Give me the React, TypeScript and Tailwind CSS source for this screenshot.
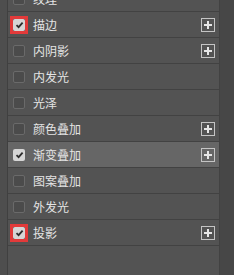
const rows = [
  { label: "纹理", checked: false, plus: false },
  { label: "描边", checked: true, plus: true, mark: true },
  { label: "内阴影", checked: false, plus: true },
  { label: "内发光", checked: false, plus: false },
  { label: "光泽", checked: false, plus: false },
  { label: "颜色叠加", checked: false, plus: true },
  { label: "渐变叠加", checked: true, plus: true, active: true },
  { label: "图案叠加", checked: false, plus: false },
  { label: "外发光", checked: false, plus: false },
  { label: "投影", checked: true, plus: true, mark: true },
];

type Row = { label: string; checked: boolean; plus: boolean; mark?: boolean; active?: boolean };

const Box = ({ checked }: { checked: boolean }) =>
  checked ? (
    <div className="w-[12px] h-[12px] rounded-[2px] bg-[#d6d6d6] flex items-center justify-center">
      <svg width="9" height="8" viewBox="0 0 9 8">
        <polyline points="1.5,4.2 3.6,6.2 7.6,1.6" fill="none" stroke="#2e2e2e" strokeWidth="1.8" />
      </svg>
    </div>
  ) : (
    <div className="w-[12px] h-[12px] rounded-[2px] bg-[#4b4b4b] border border-[#6a6a6a]" />
  );

const LayerRow = ({ row }: { row: Row }) => (
  <div
    className={`h-[26px] shrink-0 flex items-center pl-[5px] pr-[4px] border-b border-[#424242] ${
      row.active ? "bg-[#666666]" : ""
    }`}
  >
    {row.mark ? (
      <div className="-m-[3px] border-[3px] border-[#e23a3a]">
        <Box checked={row.checked} />
      </div>
    ) : (
      <Box checked={row.checked} />
    )}
    <span className="ml-[8px] text-[12px] leading-none text-[#e4e4e4]">{row.label}</span>
    {row.plus && (
      <div className="ml-auto w-[14px] h-[14px] border border-[#c4c4c4] flex items-center justify-center">
        <svg width="10" height="10" viewBox="0 0 10 10">
          <rect x="4" y="1" width="2" height="8" fill="#e6e6e6" />
          <rect x="1" y="4" width="8" height="2" fill="#e6e6e6" />
        </svg>
      </div>
    )}
  </div>
);

export default function App() {
  return (
    <div
      className="w-[234px] h-[275px] overflow-hidden flex bg-[#535353]"
      style={{ fontFamily: '"Noto Sans CJK SC", "Noto Sans", sans-serif' }}
    >
      <div className="w-[8px] shrink-0 bg-[#4e4e4e] border-r border-[#404040]" />
      <div className="w-[211px] shrink-0 flex flex-col mt-[-14px]">
        {rows.map((r) => (
          <LayerRow key={r.label} row={r} />
        ))}
      </div>
      <div className="flex-1 bg-[#474747] border-l border-[#424242]" />
    </div>
  );
}
